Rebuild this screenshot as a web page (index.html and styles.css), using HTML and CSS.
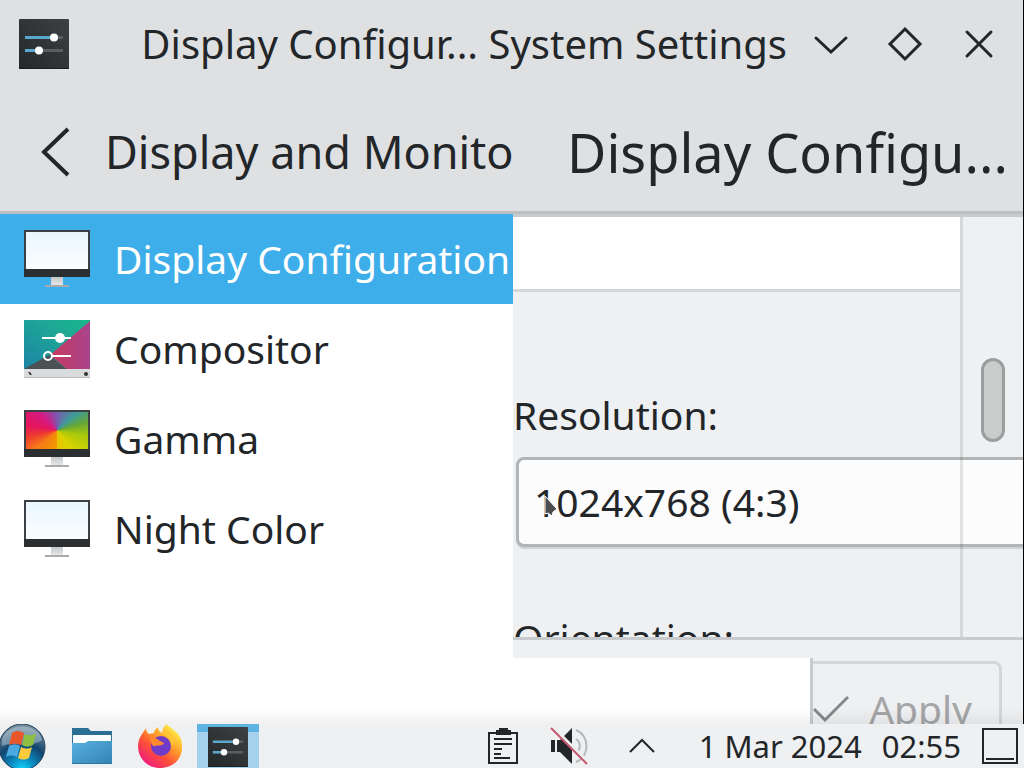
FILE: index.html
```html
<!DOCTYPE html>
<html lang="en">
  <head>
    <meta charset="UTF-8" />
    <meta name="viewport" content="width=device-width, initial-scale=1.0" />
    <title>Display Configuration - System Settings</title>
    <link rel="stylesheet" href="styles.css">
  </head>
  <body>
    <!-- Shared icon shapes -->
    <svg class="defs" width="0" height="0" aria-hidden="true">
      <defs>
        <linearGradient id="dark" x1="0" y1="1" x2="1" y2="0">
          <stop offset="0" stop-color="#24282b" />
          <stop offset="1" stop-color="#3d4144" />
        </linearGradient>
        <linearGradient id="screen" x1="0" y1="0" x2="0" y2="1">
          <stop offset="0" stop-color="#e9f6fe" />
          <stop offset="1" stop-color="#fbfdff" />
        </linearGradient>
        <linearGradient id="stand" x1="0" y1="0" x2="0" y2="1">
          <stop offset="0" stop-color="#c4c6c8" />
          <stop offset="1" stop-color="#e4e6e8" />
        </linearGradient>
        <symbol id="settings" viewBox="0 0 50 50">
          <rect width="50" height="50" rx="1" fill="url(#dark)" />
          <rect y="49" width="50" height="1" fill="#1b1e20" />
          <path d="M35 18.5h9M20 31.5h24" stroke="#5b5e61" stroke-width="3" />
          <path d="M6 18.5h29M6 31.5h14" stroke="#5aa9cc" stroke-width="3" />
          <circle cx="35" cy="18.5" r="4" fill="#fff" />
          <circle cx="20" cy="31.5" r="4" fill="#fff" />
        </symbol>
        <symbol id="monitor" viewBox="0 0 66 58">
          <path d="M27 47h12v8H27z" fill="url(#stand)" />
          <path d="M21 55h24v2H21z" fill="#a8abad" />
          <path d="M0 0h66v47H0z" fill="#3b4045" />
          <path d="M0 39h66v8H0z" fill="#2b2f32" />
          <path d="M2 2h62v37H2z" fill="url(#screen)" />
        </symbol>
      </defs>
    </svg>

    <div class="window">
      <header class="titlebar">
        <svg class="app-icon"><use href="#settings" /></svg>
        <h1>Display Configur... System Settings</h1>
        <div class="window-buttons">
          <button type="button" aria-label="Minimize">
            <svg viewBox="0 0 36 36"><path d="M3 12l15 14 15-14" /></svg>
          </button>
          <button type="button" aria-label="Maximize">
            <svg viewBox="0 0 36 36"><path d="M18 3l15 15-15 15L3 18z" /></svg>
          </button>
          <button type="button" aria-label="Close">
            <svg viewBox="0 0 36 36"><path d="M6 6l24 24M30 6L6 30" /></svg>
          </button>
        </div>
      </header>

      <div class="toolbar">
        <a class="back" href="#">
          <svg viewBox="0 0 30 50"><path d="M27 2L3 25l24 23" /></svg>
          <span>Display and Monito</span>
        </a>
        <h2>Display Configu...</h2>
      </div>

      <div class="content">
        <nav class="sidebar">
          <a class="item active" href="#">
            <svg class="item-icon"><use href="#monitor" /></svg>
            Display Configuration
          </a>
          <a class="item" href="#">
            <svg class="item-icon" viewBox="0 0 66 58">
              <defs>
                <linearGradient id="teal" x1="0" y1="1" x2="1" y2="0">
                  <stop offset="0" stop-color="#1b84a6" />
                  <stop offset="0.6" stop-color="#1ea596" />
                  <stop offset="1" stop-color="#18b88a" />
                </linearGradient>
                <linearGradient id="plum" x1="0" y1="0" x2="1" y2="0">
                  <stop offset="0" stop-color="#c73a5e" />
                  <stop offset="1" stop-color="#a9448c" />
                </linearGradient>
              </defs>
              <path d="M0 0h66v50H0z" fill="url(#teal)" />
              <path d="M66 1v49H44L26 35z" fill="url(#plum)" />
              <path d="M0 49l25-14 19 15H0z" fill="#4c5254" />
              <path d="M0 49h66v9H0z" fill="#d9dbdd" />
              <path d="M0 57h66v1H0z" fill="#b9bcbe" />
              <path d="M4 52h2l2 3H6z" fill="#333" />
              <circle cx="62" cy="54" r="2" fill="#333" />
              <path d="M18 18h29M28 36h19" stroke="#fff" stroke-width="2" />
              <circle cx="36" cy="18" r="5" fill="#fff" />
              <circle cx="24" cy="36" r="4" fill="none" stroke="#fff" stroke-width="2" />
            </svg>
            Compositor
          </a>
          <a class="item" href="#">
            <span class="item-icon gamma">
              <svg><use href="#monitor" /></svg>
              <span class="spectrum"></span>
            </span>
            Gamma
          </a>
          <a class="item" href="#">
            <svg class="item-icon"><use href="#monitor" /></svg>
            Night Color
          </a>
        </nav>

        <main class="panel">
          <div class="scroll">
            <div class="canvas"></div>
            <form class="form">
              <label for="resolution">Resolution:</label>
              <div class="select-wrap">
                <select id="resolution">
                  <option>1024x768 (4:3)</option>
                </select>
                <svg class="cursor" viewBox="0 0 13 22"><path d="M1 1v18l3-1 4 3 1-4 4-3z" /></svg>
              </div>
              <span class="next">Orientation:</span>
            </form>
            <div class="scrollbar"><div class="handle"></div></div>
          </div>
          <footer class="actions">
            <div class="blank"></div>
            <button class="apply" type="button" disabled>
              <svg viewBox="0 0 36 28"><path d="M1 14l11 11L35 2" /></svg>
              Apply
            </button>
          </footer>
        </main>
      </div>
    </div>

    <div class="taskbar">
      <div class="launchers">
        <button type="button" aria-label="Start">
          <svg viewBox="0 0 46 44">
            <defs>
              <radialGradient id="orb" cx="0.5" cy="1" r="0.95">
                <stop offset="0" stop-color="#10dcff" />
                <stop offset="0.3" stop-color="#0b86bd" />
                <stop offset="0.6" stop-color="#12466f" />
                <stop offset="1" stop-color="#758c9c" />
              </radialGradient>
            </defs>
            <circle cx="22" cy="23" r="23" fill="url(#orb)" stroke="#1d405c" />
            <path d="M2 16C6-2 38-2 42 16 30 25 13 17 2 22z" fill="#d5e3ea" opacity=".42" />
            <path d="M12 9c5-3 8-2 12 0l-3 12c-4-2-8-2-12 0z" fill="#e8572a" />
            <path d="M25 10c4 2 7 2 11-1l-3 12c-4 2-7 2-11 0z" fill="#8fc043" />
            <path d="M9 22c4-2 7-2 11 0l-3 11c-4-2-7-2-11 0z" fill="#4ba9e2" />
            <path d="M21 23c4 2 8 2 11 0l-3 11c-4 2-7 2-11 0z" fill="#fbcb3d" />
          </svg>
        </button>
        <button type="button" aria-label="File manager">
          <svg viewBox="0 0 46 44">
            <defs>
              <linearGradient id="folder" x1="0" y1="0" x2="1" y2="1">
                <stop offset="0" stop-color="#58b1e0" />
                <stop offset="1" stop-color="#3383b3" />
              </linearGradient>
            </defs>
            <path d="M3 4h16l3 3h21v12H3z" fill="#2b6f95" />
            <path d="M4 11h38v10H4z" fill="#fff" />
            <path d="M3 19h13l3-2h24v23H3z" fill="url(#folder)" />
            <path d="M3 39h40v1H3z" fill="#2e759f" />
          </svg>
        </button>
        <button type="button" aria-label="Firefox">
          <svg viewBox="0 0 46 44">
            <defs>
              <linearGradient id="fox" x1="0.85" y1="0.1" x2="0.2" y2="0.9">
                <stop offset="0" stop-color="#fff04a" />
                <stop offset="0.35" stop-color="#ffa32c" />
                <stop offset="0.65" stop-color="#ff5236" />
                <stop offset="1" stop-color="#f0207a" />
              </linearGradient>
            </defs>
            <path d="M4 10c1-2 3-4 4-6 0 3 1 4 3 6l5-1c0-3 2-4 4-6 0 3 2 5 4 6 0-4 2-7 5-9 3 5 15 8 15 21C45 35 35 44 22 44S0 34 0 22c0-5 2-9 4-12z" fill="url(#fox)" />
            <circle cx="23" cy="22" r="10" fill="#6f3bc8" />
            <path d="M12 15c3-2 7-1 10 2l4 2c-1 3-5 2-9 3-2 1-3-1-5-7z" fill="#ff8a2f" />
            <path d="M24 10c7 1 10 6 10 13 4-6 1-13-5-17z" fill="#ffc636" />
          </svg>
        </button>
        <button class="running" type="button" aria-label="System Settings">
          <svg><use href="#settings" /></svg>
        </button>
      </div>
      <div class="tray">
        <button type="button" aria-label="Clipboard">
          <svg viewBox="0 0 38 38">
            <path d="M5 6h28v30H5z" fill="none" stroke="#232629" stroke-width="2" />
            <path d="M12 8V3h3V1h9v2h3v5z" fill="#232629" />
            <path d="M10 12h18M10 17h18M10 22h8M10 27h7M10 31h16" stroke="#232629" stroke-width="2" />
          </svg>
        </button>
        <button class="volume" type="button" aria-label="Volume muted">
          <svg viewBox="0 0 38 38">
            <path d="M1 13h4v12H1zM7 13h3l12-12v36L10 25H7z" fill="#232629" />
            <path d="M26 12c5 3 5 11 0 14M26 3c14 5 14 27 0 32" fill="none" stroke="#b5b8ba" stroke-width="2" />
            <path d="M3 0l36 36" stroke="#eff0f1" stroke-width="3" />
            <path d="M1 1l36 36" stroke="#c9586b" stroke-width="2" />
          </svg>
        </button>
        <button class="more" type="button" aria-label="Show hidden icons">
          <svg viewBox="0 0 38 38"><path d="M7 25l12-12 12 12" fill="none" stroke="#232629" stroke-width="2" /></svg>
        </button>
        <time class="clock"><span>1 Mar 2024</span> <span>02:55</span></time>
        <button type="button" aria-label="Show desktop">
          <svg viewBox="0 0 38 38">
            <path d="M2 2h34v34H2zM5 32h28" fill="none" stroke="#232629" stroke-width="2" />
          </svg>
        </button>
      </div>
    </div>
  </body>
</html>
```
FILE: styles.css
```css
* {
  box-sizing: border-box;
}

body {
  display: flex;
  flex-direction: column;
  height: 100vh;
  margin: 0;
  overflow: hidden;
  color: #232629;
  background: #fff;
  font-family: "Noto Sans", sans-serif;
  font-size: 39px;
  line-height: 54px;
}

h1,
h2 {
  margin: 0;
  font-weight: 400;
  white-space: nowrap;
}

a {
  color: inherit;
  text-decoration: none;
}

button {
  padding: 0;
  border: 0;
  color: inherit;
  background: none;
  font: inherit;
}

svg {
  display: block;
  flex: none;
}

.defs {
  position: absolute;
}

/* Window */
.window {
  position: relative;
  display: flex;
  flex: 1;
  flex-direction: column;
  min-height: 0;
  overflow: hidden;
}

/* dark edge on the right side of the window */
.window::before {
  content: "";
  position: absolute;
  top: 0;
  right: 0;
  bottom: 0;
  z-index: 1;
  width: 1px;
  background: #000;
}

/* soft shadow the taskbar throws on the window */
.window::after {
  content: "";
  position: absolute;
  right: 0;
  bottom: 0;
  left: 0;
  height: 16px;
  background: linear-gradient(rgba(0, 0, 0, 0), rgba(0, 0, 0, 0.06));
}

.titlebar {
  display: flex;
  align-items: center;
  height: 88px;
  padding: 0 27px 0 19px;
  background: #dee0e2;
}

.app-icon {
  width: 50px;
  height: 50px;
}

.titlebar h1 {
  flex: 1;
  font-size: 40px;
  text-align: right;
}

.window-buttons {
  display: flex;
  gap: 38px;
  margin-left: 26px;
}

.window-buttons svg {
  width: 36px;
  height: 36px;
}

.window-buttons path {
  fill: none;
  stroke: #232629;
  stroke-width: 3;
  stroke-linecap: round;
}

.toolbar {
  display: grid;
  grid-template-columns: calc(50% + 1px) 1fr;
  align-items: center;
  height: 126px;
  padding-top: 4px;
  border-bottom: 3px solid #bcc0c2;
  background: #dee0e2;
}

.back {
  display: flex;
  align-items: center;
  gap: 34px;
  padding-left: 41px;
  overflow: hidden;
  font-size: 45px;
  line-height: 64px;
  white-space: nowrap;
}

.back svg {
  width: 30px;
  height: 50px;
}

.back path {
  fill: none;
  stroke: #232629;
  stroke-width: 4;
}

.toolbar h2 {
  padding-left: 54px;
  overflow: hidden;
  font-size: 54px;
  line-height: 74px;
}

.content {
  display: grid;
  flex: 1;
  grid-template-columns: calc(50% + 1px) 1fr;
  min-height: 0;
}

/* Sidebar */
.sidebar {
  min-width: 0;
  background: #fff;
}

.item {
  display: flex;
  align-items: center;
  gap: 24px;
  height: 90px;
  padding-left: 24px;
  overflow: hidden;
  white-space: nowrap;
}

.item.active {
  color: #fff;
  background: #3daee9;
}

.item-icon {
  width: 66px;
  height: 58px;
}

.gamma {
  position: relative;
}

.gamma svg {
  width: 66px;
  height: 58px;
}

.spectrum {
  position: absolute;
  top: 2px;
  left: 2px;
  width: 62px;
  height: 37px;
  background: conic-gradient(from 0deg, #7a58b0, #3f9c98 50deg, #67a834 75deg, #a9c80c 100deg, #d9d400 140deg, #eac300 179deg, #f29a00 180deg, #f57c17 230deg, #ee3a30 258deg, #e5145c 280deg, #d41c85 315deg, #7a58b0);
}

/* Display panel */
.panel {
  display: flex;
  flex-direction: column;
  min-width: 0;
  min-height: 0;
  background: #eff0f1;
}

.scroll {
  position: relative;
  flex: 1;
  min-height: 0;
  overflow: hidden;
  border-top: 3px solid #c8cbcd;
}

.canvas {
  height: 75px;
  margin-right: 64px;
  border-bottom: 3px solid #d5d7d9;
  background: #fff;
}

.form {
  display: flex;
  flex-direction: column;
  padding-top: 96px;
}

.select-wrap {
  position: relative;
  height: 90px;
  margin: 15px 0 64px;
  padding-left: 3px;
}

.select-wrap select {
  width: 110%;
  height: 90px;
  padding: 0 15px;
  border: 3px solid #b2b5b7;
  border-radius: 8px;
  color: inherit;
  background: #fcfcfc;
  box-shadow: 0 2px 1px rgba(0, 0, 0, 0.12);
  font: inherit;
  appearance: none;
}

.cursor {
  position: absolute;
  top: 38px;
  left: 31px;
  width: 13px;
  height: 22px;
}

.cursor path {
  fill: #4b4e50;
  stroke: #fff;
}

.scrollbar {
  position: absolute;
  top: 0;
  right: 0;
  bottom: 0;
  width: 64px;
  padding: 141px 0 0 18px;
  border-left: 3px solid rgba(35, 38, 41, 0.12);
}

.handle {
  width: 24px;
  height: 84px;
  border: 3px solid #9b9d9e;
  border-radius: 12px;
  background: #cbcdcd;
}

.actions {
  display: flex;
  height: 87px;
  border-top: 3px solid #c8cbcd;
}

.blank {
  flex: 1;
  margin-top: 18px;
  border-right: 3px solid #c8cbcd;
  background: #fff;
}

.apply {
  display: flex;
  align-items: center;
  gap: 20px;
  height: 96px;
  margin: 21px 22px 0 0;
  padding-right: 27px;
  border: 3px solid #d3d5d6;
  border-left: 0;
  border-radius: 0 8px 0 0;
  color: #a3a5a6;
}

.apply svg {
  width: 36px;
  height: 28px;
}

.apply path {
  fill: none;
  stroke: #858788;
  stroke-width: 3;
}

/* Taskbar */
.taskbar {
  display: flex;
  justify-content: space-between;
  height: 44px;
  background: #eff0f1;
  font-size: 31px;
  line-height: 44px;
}

.launchers,
.tray {
  display: flex;
  align-items: center;
}

.launchers {
  gap: 23px;
}

.launchers svg {
  width: 46px;
  height: 44px;
}

.running {
  width: 62px;
  margin-left: -10px;
  padding: 3px 11px 1px;
  background: linear-gradient(#5fb3e3 8px, #a6d1ec 8px);
}

.running svg {
  width: 40px;
  height: 40px;
}

.tray {
  gap: 20px;
  padding-right: 5px;
}

.tray svg {
  width: 38px;
  height: 38px;
}

.volume {
  margin: 0 8px;
}

.more {
  padding: 0 7px;
}

.clock {
  display: flex;
  gap: 20px;
  padding-left: 11px;
  white-space: nowrap;
}
```
